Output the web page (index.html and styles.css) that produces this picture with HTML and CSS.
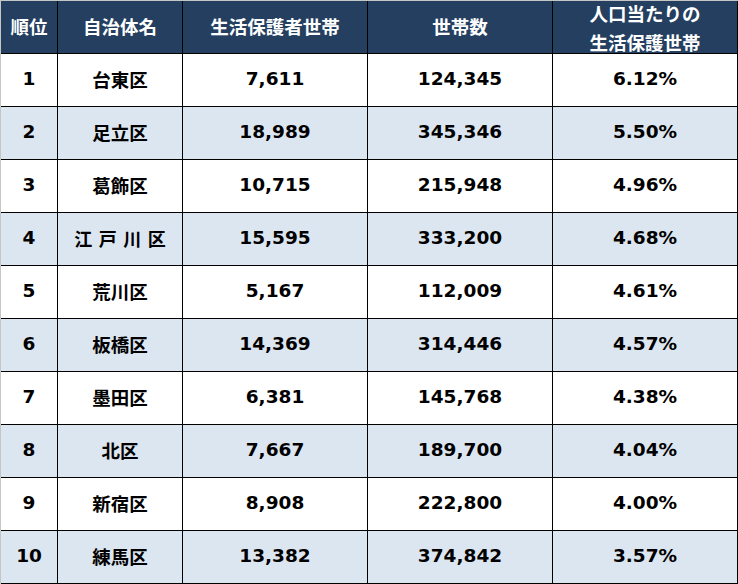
FILE: index.html
```html
<!DOCTYPE html>
<html lang="ja">
<head>
<meta charset="utf-8">
<link rel="stylesheet" href="styles.css">
</head>
<body>
<div class="table">
  <div class="cell head">順位</div>
  <div class="cell head">自治体名</div>
  <div class="cell head">生活保護者世帯</div>
  <div class="cell head">世帯数</div>
  <div class="cell head two"><span>人口当たりの</span><span>生活保護世帯</span></div>

  <div class="cell">1</div><div class="cell">台東区</div><div class="cell">7,611</div><div class="cell">124,345</div><div class="cell">6.12%</div>
  <div class="cell alt">2</div><div class="cell alt">足立区</div><div class="cell alt">18,989</div><div class="cell alt">345,346</div><div class="cell alt">5.50%</div>
  <div class="cell">3</div><div class="cell">葛飾区</div><div class="cell">10,715</div><div class="cell">215,948</div><div class="cell">4.96%</div>
  <div class="cell alt">4</div><div class="cell alt"><span class="spread">江戸川区</span></div><div class="cell alt">15,595</div><div class="cell alt">333,200</div><div class="cell alt">4.68%</div>
  <div class="cell">5</div><div class="cell">荒川区</div><div class="cell">5,167</div><div class="cell">112,009</div><div class="cell">4.61%</div>
  <div class="cell alt">6</div><div class="cell alt">板橋区</div><div class="cell alt">14,369</div><div class="cell alt">314,446</div><div class="cell alt">4.57%</div>
  <div class="cell">7</div><div class="cell">墨田区</div><div class="cell">6,381</div><div class="cell">145,768</div><div class="cell">4.38%</div>
  <div class="cell alt">8</div><div class="cell alt">北区</div><div class="cell alt">7,667</div><div class="cell alt">189,700</div><div class="cell alt">4.04%</div>
  <div class="cell">9</div><div class="cell">新宿区</div><div class="cell">8,908</div><div class="cell">222,800</div><div class="cell">4.00%</div>
  <div class="cell alt">10</div><div class="cell alt">練馬区</div><div class="cell alt">13,382</div><div class="cell alt">374,842</div><div class="cell alt">3.57%</div>
</div>
</body>
</html>
```

FILE: styles.css
```css
html, body {
  margin: 0;
  padding: 0;
  background: #ffffff;
}
.table {
  display: grid;
  grid-template-columns: 57px 125px 185px 185px 185px;
  grid-auto-rows: 53px;
  width: 737px;
  border-top: 1px solid #c6c6c6;
  border-left: 1px solid #c6c6c6;
  font-family: "DejaVu Sans", "Noto Sans CJK JP", sans-serif;
  font-weight: bold;
  font-size: 18.5px;
  color: #000000;
}
.cell {
  box-sizing: border-box;
  border-right: 1px solid #000000;
  border-bottom: 1px solid #000000;
  display: flex;
  align-items: center;
  justify-content: center;
  text-align: center;
  background: #ffffff;
  padding-bottom: 3px;
}
.cell.alt {
  background: #dce6f1;
}
.cell.head {
  background: #243f60;
  color: #ffffff;
  font-family: "Noto Sans CJK JP", sans-serif;
  font-size: 18.5px;
  padding-bottom: 3px;
}
.cell.two {
  flex-direction: column;
  gap: 7px;
  line-height: 22px;
  padding-bottom: 0;
}
.spread {
  letter-spacing: 6.5px;
  margin-right: -6.5px;
  font-family: "Noto Sans CJK JP", sans-serif;
  font-size: 18px;
}
```
